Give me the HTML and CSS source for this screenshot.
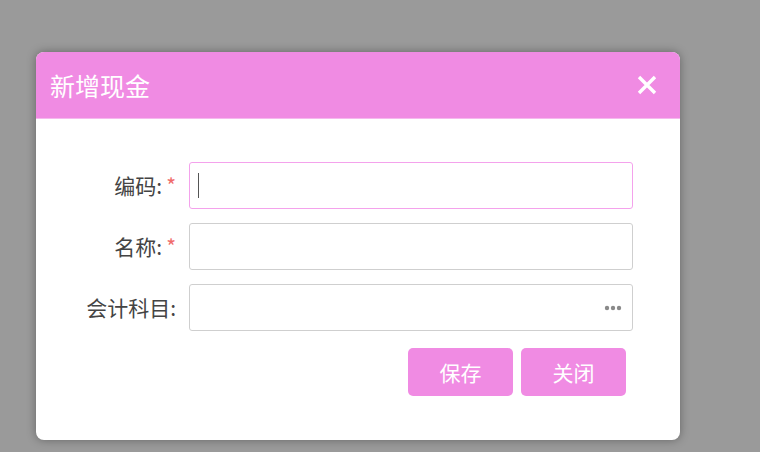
FILE: index.html
```html
<!DOCTYPE html>
<html lang="zh-CN">
<head>
<meta charset="utf-8">
<title>新增现金</title>
<link rel="stylesheet" href="styles.css">
</head>
<body>
<div class="stage">
  <div class="dialog">
    <div class="dialog-header">
      <span class="dialog-title">新增现金</span>
      <span class="dialog-close" aria-label="关闭">
        <svg width="20" height="20" viewBox="0 0 20 20"><path d="M2 2 L18 18 M18 2 L2 18" stroke="#fff" stroke-width="3.4" stroke-linecap="butt" fill="none"/></svg>
      </span>
    </div>
    <div class="dialog-body">
      <div class="form-row">
        <label class="form-label">编码:<span class="req">*</span></label>
        <div class="field field-focus"><span class="caret"></span><input class="field-input" type="text"></div>
      </div>
      <div class="form-row">
        <label class="form-label">名称:<span class="req">*</span></label>
        <div class="field"><input class="field-input" type="text"></div>
      </div>
      <div class="form-row">
        <label class="form-label">会计科目:</label>
        <div class="field"><input class="field-input" type="text"><span class="more"><svg width="18" height="6" viewBox="0 0 18 6"><circle cx="3" cy="3" r="2.2" fill="#8a8a8a"/><circle cx="9" cy="3" r="2.2" fill="#8a8a8a"/><circle cx="15" cy="3" r="2.2" fill="#8a8a8a"/></svg></span></div>
      </div>
      <div class="actions">
        <button class="btn" type="button">保存</button>
        <button class="btn" type="button">关闭</button>
      </div>
    </div>
  </div>
</div>
</body>
</html>
```
FILE: styles.css
```css
html, body {
  margin: 0;
  padding: 0;
  height: 100%;
  background: #9a9a9a;
  font-family: "Noto Sans CJK SC", "Noto Sans", "Liberation Sans", sans-serif;
  overflow: hidden;
}
.stage {
  padding: 52px 0 0 36px;
}
.dialog {
  width: 644px;
  height: 388px;
  background: #fff;
  border-radius: 8px;
  box-shadow: 0 0 10px rgba(0, 0, 0, 0.35);
  overflow: hidden;
  display: flex;
  flex-direction: column;
}
.dialog-header {
  height: 67px;
  background: #f08be3;
  display: flex;
  align-items: center;
  justify-content: space-between;
  padding: 0 23px 0 14px;
  border-bottom: 1px solid #f6b9ee;
  box-sizing: border-box;
}
.dialog-title {
  color: #fff;
  font-size: 25px;
  line-height: 1;
}
.dialog-close {
  display: flex;
  width: 20px;
  height: 20px;
}
.dialog-body {
  padding: 43px 47px 0 0;
  display: flex;
  flex-direction: column;
  gap: 14px;
}
.form-row {
  display: flex;
  align-items: center;
  gap: 13px;
}
.form-label {
  width: 140px;
  text-align: right;
  font-size: 21px;
  color: #444;
  line-height: 1;
}
.req {
  color: #f06b6b;
  margin-left: 4px;
  font-size: 21px;
}
.field {
  width: 444px;
  height: 47px;
  box-sizing: border-box;
  border: 1px solid #cfcfcf;
  border-radius: 3px;
  display: flex;
  align-items: center;
  padding: 0 10px 0 8px;
}
.field-focus {
  border-color: #f4a2ec;
}
.caret {
  width: 1px;
  height: 25px;
  background: #555;
  flex: none;
}
.field-input {
  flex: 1;
  min-width: 0;
  border: 0;
  outline: none;
  background: transparent;
  font-size: 16px;
  font-family: inherit;
  padding: 0;
}
.more {
  display: flex;
  flex: none;
}
.actions {
  display: flex;
  gap: 8px;
  padding-left: 372px;
  margin-top: 3px;
}
.btn {
  width: 105px;
  height: 48px;
  border: 0;
  border-radius: 5px;
  background: #f08be3;
  color: #fff;
  font-size: 21px;
  font-family: inherit;
  padding: 0;
  cursor: pointer;
}
```
